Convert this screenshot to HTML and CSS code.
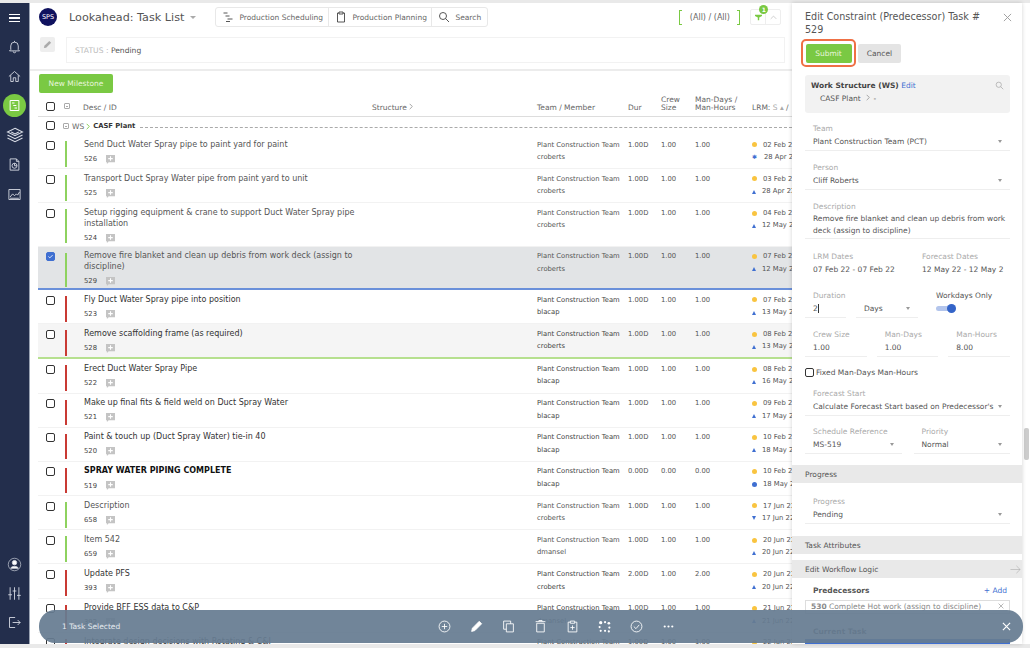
FILE: index.html
```html
<!DOCTYPE html>
<html>
  <head>
    <title>Lookahead: Task List</title>
    <meta charset="utf-8">
    <link rel="stylesheet" href="styles.css">
  </head>
  <body>
    <svg class="defs" width="0" height="0">
      <symbol id="i-plus-note" viewBox="0 0 10 10"><path d="M0 0h10v8H3L1 10V8H0z" fill="#c4c4c4"/><path d="M5 1.500v5M2.500 4h5" stroke="#fff" stroke-width="1.200"/></symbol>
      <symbol id="i-chev" viewBox="0 0 6 10"><path d="M1 1l4 4-4 4" fill="none" stroke="currentColor" stroke-width="1.300"/></symbol>
    </svg>
    <div class="app">
      <!-- left nav -->
      <nav class="sidebar">
        <div class="burger"><span></span><span></span><span></span></div>
        <svg class="nav-icon" viewBox="0 0 24 24"><path d="M12 3v2M6 17V11a6 6 0 0 1 12 0v6l2 2H4zM10 20a2 2 0 0 0 4 0"/></svg>
        <svg class="nav-icon" viewBox="0 0 24 24"><path d="M3 12l9-8 9 8M6 10v10h4v-6h4v6h4V10"/></svg>
        <div class="nav-active"><svg viewBox="0 0 24 24"><path d="M5 4h14v16H5zM8 8h4M10 12h5M12 16h4"/></svg></div>
        <svg class="nav-icon nav-wide" viewBox="0 0 24 24"><path d="M12 3l10 5-10 5L2 8zM2 12l10 5 10-5M2 16l10 5 10-5M7 8l5 2.500 5-2.500"/></svg>
        <svg class="nav-icon" viewBox="0 0 24 24"><path d="M5 3h10l4 4v14H5zM15 3v4h4"/><circle cx="12" cy="14" r="4"/><path d="M12 10v4h4"/></svg>
        <svg class="nav-icon" viewBox="0 0 24 24"><path d="M3 4h18v16H3zM5 16l4-5 3 3 3-3 2 2 3-5"/><path d="M5 18h14"/></svg>
        <div class="nav-bottom">
          <svg class="nav-icon" viewBox="0 0 24 24"><circle cx="12" cy="12" r="10" stroke-width="1"/><circle cx="12" cy="9" r="3.500" fill="#fff"/><path d="M6 18c1-4 11-4 12 0z" fill="#fff"/></svg>
          <svg class="nav-icon" viewBox="0 0 24 24"><path d="M5 2v20M12 2v20M19 2v20M2 14h6M9 8h6M16 15h6"/></svg>
          <svg class="nav-icon" viewBox="0 0 24 24"><path d="M13 4H4v16h9M9 12h12M17 8l4 4-4 4"/></svg>
        </div>
      </nav>

      <main class="main">
        <header class="topbar">
          <div class="logo">SPS</div>
          <h1>Lookahead: Task List</h1>
          <span class="caret title-caret"></span>
          <div class="btn-group">
            <span class="seg seg-sched"><svg viewBox="0 0 24 24"><path d="M3 4h8M7 10h8M11 16h10M8 21h8"/></svg>Production Scheduling</span>
            <span class="seg seg-plan"><svg viewBox="0 0 24 24"><path d="M8 4H5v18h14V4h-3M8 2h8v4H8z"/></svg>Production Planning</span>
            <span class="seg seg-search"><svg viewBox="0 0 24 24"><circle cx="10" cy="10" r="7"/><path d="M15 15l7 7"/></svg>Search</span>
          </div>
          <div class="all-filter">(All) / (All)</div>
          <div class="filter-group">
            <span class="filter-cell"><svg viewBox="0 0 10 10"><path d="M0 1h10v2L6 5v4H4V5L0 3z" fill="#7ac943"/></svg><b class="badge">1</b></span>
            <span class="filter-cell"><svg viewBox="0 0 10 10"><path d="M1 7l4-4 4 4" class="chev"/></svg></span>
          </div>
        </header>
        <div class="status-row">
          <span class="edit-btn"><svg viewBox="0 0 10 10"><path d="M1 9l.5-2.500L7 1l2 2-5.500 5.500z" fill="#aaa"/></svg></span>
          <div class="status-box"><span class="status-key">STATUS :</span> Pending</div>
        </div>
        <div class="action-row"><button class="btn-new">New Milestone</button></div>

        <div class="row head">
          <span class="cell-check"><i class="check"></i></span>
          <span class="collapse"></span>
          <span class="head-desc">Desc / ID</span>
          <span class="head-structure">Structure <svg class="chev-icon"><use href="#i-chev"/></svg></span>
          <span>Team / Member</span>
          <span>Dur</span>
          <span>Crew<br>Size</span>
          <span>Man-Days /<br>Man-Hours</span>
          <span class="nowrap">LRM: <em>S &#x25B4;</em> /</span>
        </div>
        <div class="ws-row">
          <span class="cell-check"><i class="check"></i></span>
          <span class="collapse"></span>
          <span class="ws-key">WS</span><svg class="chev-icon ws-arrow"><use href="#i-chev"/></svg><b>CASF Plant</b>
          <span class="ws-line"></span>
        </div>

        <div class="row task green">
          <span class="cell-check"><i class="check"></i></span><span class="bar"></span>
          <div class="desc">Send Duct Water Spray pipe to paint yard for paint<div class="id">526 <svg class="note"><use href="#i-plus-note"/></svg></div></div>
          <div class="team">Plant Construction Team<br>croberts</div><span>1.00D</span><span>1.00</span><span>1.00</span>
          <div class="lrm"><span><i class="dot"></i>02 Feb 22</span><span><i class="star">&#x2731;</i>28 Apr 22</span></div>
        </div>
        <div class="row task green">
          <span class="cell-check"><i class="check"></i></span><span class="bar"></span>
          <div class="desc">Transport Duct Spray Water pipe from paint yard to unit<div class="id">525 <svg class="note"><use href="#i-plus-note"/></svg></div></div>
          <div class="team">Plant Construction Team<br>croberts</div><span>1.00D</span><span>1.00</span><span>1.00</span>
          <div class="lrm"><span><i class="dot"></i>03 Feb 22</span><span><i class="tri"></i>28 Apr 22</span></div>
        </div>
        <div class="row task green tall">
          <span class="cell-check"><i class="check"></i></span><span class="bar"></span>
          <div class="desc">Setup rigging equipment &amp; crane to support Duct Water Spray pipe installation<div class="id">524 <svg class="note"><use href="#i-plus-note"/></svg></div></div>
          <div class="team">Plant Construction Team<br>croberts</div><span>1.00D</span><span>1.00</span><span>1.00</span>
          <div class="lrm"><span><i class="dot"></i>04 Feb 22</span><span><i class="tri"></i>12 May 22</span></div>
        </div>
        <div class="row task green tall selected">
          <span class="cell-check"><i class="check checked"><svg viewBox="0 0 10 10"><path d="M2 5l2 2 4-4"/></svg></i></span><span class="bar"></span>
          <div class="desc">Remove fire blanket and clean up debris from work deck (assign to discipline)<div class="id">529 <svg class="note"><use href="#i-plus-note"/></svg></div></div>
          <div class="team">Plant Construction Team<br>croberts</div><span>1.00D</span><span>1.00</span><span>1.00</span>
          <div class="lrm"><span><i class="dot"></i>07 Feb 22</span><span><i class="tri"></i>12 May 22</span></div>
        </div>
        <div class="row task red">
          <span class="cell-check"><i class="check"></i></span><span class="bar"></span>
          <div class="desc">Fly Duct Water Spray pipe into position<div class="id">523 <svg class="note"><use href="#i-plus-note"/></svg></div></div>
          <div class="team">Plant Construction Team<br>blacap</div><span>1.00D</span><span>1.00</span><span>1.00</span>
          <div class="lrm"><span><i class="dot"></i>07 Feb 22</span><span><i class="tri"></i>13 May 22</span></div>
        </div>
        <div class="row task red hover">
          <span class="cell-check"><i class="check"></i></span><span class="bar"></span>
          <div class="desc">Remove scaffolding frame (as required)<div class="id">528 <svg class="note"><use href="#i-plus-note"/></svg></div></div>
          <div class="team">Plant Construction Team<br>croberts</div><span>1.00D</span><span>1.00</span><span>1.00</span>
          <div class="lrm"><span><i class="dot"></i>08 Feb 22</span><span><i class="tri"></i>13 May 22</span></div>
        </div>
        <div class="row task red">
          <span class="cell-check"><i class="check"></i></span><span class="bar"></span>
          <div class="desc">Erect Duct Water Spray Pipe<div class="id">522 <svg class="note"><use href="#i-plus-note"/></svg></div></div>
          <div class="team">Plant Construction Team<br>blacap</div><span>1.00D</span><span>1.00</span><span>1.00</span>
          <div class="lrm"><span><i class="dot"></i>08 Feb 22</span><span><i class="tri"></i>16 May 22</span></div>
        </div>
        <div class="row task red">
          <span class="cell-check"><i class="check"></i></span><span class="bar"></span>
          <div class="desc">Make up final fits &amp; field weld on Duct Spray Water<div class="id">521 <svg class="note"><use href="#i-plus-note"/></svg></div></div>
          <div class="team">Plant Construction Team<br>blacap</div><span>1.00D</span><span>1.00</span><span>1.00</span>
          <div class="lrm"><span><i class="dot"></i>09 Feb 22</span><span><i class="tri"></i>17 May 22</span></div>
        </div>
        <div class="row task red">
          <span class="cell-check"><i class="check"></i></span><span class="bar"></span>
          <div class="desc">Paint &amp; touch up (Duct Spray Water) tie-in 40<div class="id">520 <svg class="note"><use href="#i-plus-note"/></svg></div></div>
          <div class="team">Plant Construction Team<br>blacap</div><span>1.00D</span><span>1.00</span><span>1.00</span>
          <div class="lrm"><span><i class="dot"></i>10 Feb 22</span><span><i class="tri"></i>18 May 22</span></div>
        </div>
        <div class="row task red milestone">
          <span class="cell-check"><i class="check"></i></span><span class="bar"></span>
          <div class="desc"><b>SPRAY WATER PIPING COMPLETE</b><div class="id">519 <svg class="note"><use href="#i-plus-note"/></svg></div></div>
          <div class="team">Plant Construction Team<br>blacap</div><span>0.00D</span><span>0.00</span><span>0.00</span>
          <div class="lrm"><span><i class="dot"></i>10 Feb 22</span><span><i class="dot blue"></i>18 May 22</span></div>
        </div>
        <div class="row task green">
          <span class="cell-check"><i class="check"></i></span><span class="bar"></span>
          <div class="desc">Description<div class="id">658 <svg class="note"><use href="#i-plus-note"/></svg></div></div>
          <div class="team">Plant Construction Team<br>croberts</div><span>1.00D</span><span>1.00</span><span>1.00</span>
          <div class="lrm"><span><i class="dot"></i>17 Jun 22</span><span><i class="tri down"></i>17 Jun 22</span></div>
        </div>
        <div class="row task green">
          <span class="cell-check"><i class="check"></i></span><span class="bar"></span>
          <div class="desc">Item 542<div class="id">659 <svg class="note"><use href="#i-plus-note"/></svg></div></div>
          <div class="team">Plant Construction Team<br>dmansel</div><span>1.00D</span><span>1.00</span><span>1.00</span>
          <div class="lrm"><span><i class="dot"></i>20 Jun 22</span><span><i class="tri"></i>20 Jun 22</span></div>
        </div>
        <div class="row task red">
          <span class="cell-check"><i class="check"></i></span><span class="bar"></span>
          <div class="desc">Update PFS<div class="id">393 <svg class="note"><use href="#i-plus-note"/></svg></div></div>
          <div class="team">Plant Construction Team<br>croberts</div><span>2.00D</span><span>1.00</span><span>2.00</span>
          <div class="lrm"><span><i class="dot"></i>20 Jun 22</span><span><i class="tri"></i>20 Jun 22</span></div>
        </div>
        <div class="row task red">
          <span class="cell-check"><i class="check"></i></span><span class="bar"></span>
          <div class="desc">Provide BFF ESS data to C&amp;P<div class="id">392 <svg class="note"><use href="#i-plus-note"/></svg></div></div>
          <div class="team">Plant Construction Team<br>dmansel</div><span>1.00D</span><span>1.00</span><span>1.00</span>
          <div class="lrm"><span><i class="dot"></i>21 Jun 22</span><span><i class="tri"></i>21 Jun 22</span></div>
        </div>
        <div class="row task red">
          <span class="cell-check"><i class="check"></i></span><span class="bar"></span>
          <div class="desc">Integrate design decisions with Rotating &amp; C&amp;I</div>
          <div class="team">Plant Construction Team</div><span>1.00D</span><span>1.00</span><span>1.00</span>
          <div class="lrm"><span><i class="dot"></i>22 Jun 22</span></div>
        </div>
      </main>

      <!-- edit panel -->
      <aside class="panel">
        <div class="panel-head">
          <h2>Edit Constraint (Predecessor) Task # 529</h2>
          <svg class="panel-close" viewBox="0 0 10 10"><path d="M1 1l8 8M9 1l-8 8"/></svg>
        </div>
        <div class="panel-actions">
          <span class="focus-ring"><button class="btn-submit">Submit</button></span>
          <button class="btn-cancel">Cancel</button>
        </div>
        <div class="ws-box">
          <div><b>Work Structure (WS)</b> <a>Edit</a></div>
          <div class="ws-path">CASF Plant <svg class="chev-icon"><use href="#i-chev"/></svg> -</div>
          <svg class="ws-search" viewBox="0 0 24 24"><circle cx="10" cy="10" r="7"/><path d="M15 15l7 7"/></svg>
        </div>

        <div class="field"><label>Team</label><div class="value select">Plant Construction Team (PCT)</div></div>
        <div class="field"><label>Person</label><div class="value select">Cliff Roberts</div></div>
        <div class="field field-desc"><label>Description</label><div class="value area">Remove fire blanket and clean up debris from work deck (assign to discipline)</div></div>

        <div class="dates">
          <div class="field plain"><label>LRM Dates</label><div class="value">07 Feb 22 - 07 Feb 22</div></div>
          <div class="field plain"><label>Forecast Dates</label><div class="value">12 May 22 - 12 May 2</div></div>
        </div>

        <div class="duration">
          <div class="field dur-num"><label>Duration</label><div class="value"><span class="cursor">2</span></div></div>
          <div class="field dur-unit"><label>&nbsp;</label><div class="value select">Days</div></div>
          <div class="workdays">
            <label>Workdays Only</label>
            <span class="toggle"><i></i></span>
          </div>
        </div>

        <div class="three">
          <div class="field"><label>Crew Size</label><div class="value">1.00</div></div>
          <div class="field"><label>Man-Days</label><div class="value">1.00</div></div>
          <div class="field"><label>Man-Hours</label><div class="value">8.00</div></div>
        </div>

        <div class="fixed"><i class="check"></i>Fixed Man-Days Man-Hours</div>

        <div class="field"><label>Forecast Start</label><div class="value select">Calculate Forecast Start based on Predecessor's</div></div>
        <div class="two">
          <div class="field"><label>Schedule Reference</label><div class="value select">MS-519</div></div>
          <div class="field"><label>Priority</label><div class="value select">Normal</div></div>
        </div>

        <div class="band band-progress">Progress</div>
        <div class="field field-progress"><label>Progress</label><div class="value select">Pending</div></div>
        <div class="band band-attr">Task Attributes</div>
        <div class="band band-logic">Edit Workflow Logic<svg viewBox="0 0 24 24"><path d="M1 12h21M14 4l8 8-8 8"/></svg></div>

        <div class="pred-head"><b>Predecessors</b><a>+ Add</a></div>
        <div class="pred-box"><b>530</b> Complete Hot work (assign to discipline)<svg viewBox="0 0 10 10"><path d="M1 1l8 8M9 1l-8 8"/></svg></div>
        <div class="current"><b>Current Task</b></div>
        <div class="current-line"></div>
      </aside>
      <div class="scrollbar"><span></span></div>

      <!-- selection toolbar -->
      <div class="select-bar">
        <span class="select-count">1 Task Selected</span>
        <div class="select-tools">
          <svg viewBox="0 0 24 24"><circle cx="12" cy="12" r="10"/><path d="M12 7v10M7 12h10"/></svg>
          <svg viewBox="0 0 24 24"><path d="M3 21l1.500-6L17 2.500l4.500 4.500L9 19.500z" fill="#fff"/></svg>
          <svg viewBox="0 0 24 24"><path d="M8 7h13v15H8zM16 7V2H3v15h5"/></svg>
          <svg viewBox="0 0 24 24"><path d="M5 6h14v16H5zM3 3h18M9 3V1h6v2"/></svg>
          <svg viewBox="0 0 24 24"><path d="M8 4H4v18h16V4h-4M8 2h8v4H8zM12 10v8M8 14h8"/></svg>
          <svg viewBox="0 0 24 24" class="tool-net"><circle cx="5" cy="5" r="3"/><circle cx="13" cy="4" r="2"/><circle cx="20" cy="6" r="2.500"/><circle cx="3" cy="13" r="2"/><circle cx="21" cy="14" r="2"/><circle cx="5" cy="20" r="2"/><circle cx="13" cy="20" r="2"/><circle cx="20" cy="21" r="2"/></svg>
          <svg viewBox="0 0 24 24"><circle cx="12" cy="12" r="10"/><path d="M7 12l4 4 6-7"/></svg>
          <svg viewBox="0 0 24 24" class="tool-dots"><circle cx="5" cy="12" r="2"/><circle cx="12" cy="12" r="2"/><circle cx="19" cy="12" r="2"/></svg>
        </div>
        <svg class="select-close" viewBox="0 0 10 10"><path d="M1 1l8 8M9 1l-8 8"/></svg>
      </div>
    </div>
  </body>
</html>
```

FILE: styles.css
```css
html, body {
  margin: 0;
  width: 1030px;
  height: 648px;
  overflow: hidden;
  background-color: #e9e9e9;
  font-family: "DejaVu Sans", sans-serif;
  font-size: 7.5px;
  color: #555;
}
.defs {
  position: absolute;
}
button {
  border: 0;
  font-family: inherit;
  padding: 0;
}
i, em {
  font-style: normal;
}
.chev-icon {
  width: 4px;
  height: 7px;
  color: #999;
}
.app {
  position: relative;
  display: flex;
  height: 641px;
  margin-top: 3px;
  background-color: #fff;
}

/* sidebar */
.sidebar {
  flex: 0 0 29px;
  display: flex;
  flex-direction: column;
  align-items: center;
  background-color: #232e4c;
  border-right: 1px solid #9aa3b3;
}
.burger {
  margin: 11px 0 15px 0;
}
.burger span {
  display: block;
  width: 11px;
  height: 1.4px;
  margin-bottom: 2px;
  background-color: #fff;
}
.nav-icon {
  width: 15px;
  height: 15px;
  margin-bottom: 14.5px;
  fill: none;
  stroke: #d9dde6;
  stroke-width: 1.4;
}
.nav-wide {
  width: 18px;
  height: 18px;
  margin: 0 0 13px 0;
}
.nav-active {
  width: 23px;
  height: 23px;
  margin: -4px 0 9px 0;
  border-radius: 50%;
  background-color: #7ac943;
  display: flex;
  align-items: center;
  justify-content: center;
}
.nav-active svg {
  width: 15px;
  height: 15px;
  fill: none;
  stroke: #fff;
  stroke-width: 1.6;
}
.nav-bottom {
  margin-top: auto;
  display: flex;
  flex-direction: column;
  align-items: center;
}
.nav-bottom .nav-icon {
  margin-bottom: 14px;
}

/* main */
.main {
  flex: 0 0 762px;
  overflow: hidden;
}
.topbar {
  display: flex;
  align-items: center;
  height: 28px;
  padding: 0 0 0 9px;
}
.logo {
  flex: none;
  width: 18px;
  height: 18px;
  border-radius: 50%;
  background-color: #10125f;
  color: #fff;
  font-size: 6.5px;
  line-height: 18px;
  text-align: center;
}
h1 {
  margin: 0 0 0 12px;
  font-size: 11.2px;
  font-weight: normal;
  color: #555;
  white-space: nowrap;
}
.caret {
  width: 0;
  height: 0;
  border-left: 3px solid transparent;
  border-right: 3px solid transparent;
  border-top: 3.5px solid #aaa;
}
.title-caret {
  margin: 0 0 0 6px;
}
.btn-group {
  display: flex;
  flex: none;
  height: 18px;
  margin-left: 19px;
  border: 1px solid #e8e8e8;
  border-radius: 3px;
}
.seg {
  display: flex;
  align-items: center;
  gap: 5px;
  padding: 0 6px;
  border-right: 1px solid #e8e8e8;
  white-space: nowrap;
  box-sizing: border-box;
  color: #666;
}
.seg:last-child {
  border-right: 0;
}
.seg svg {
  flex: none;
  width: 12px;
  height: 12px;
  fill: none;
  stroke: #444;
  stroke-width: 1.8;
}
.seg-sched {
  width: 113px;
}
.seg-plan {
  width: 103px;
}
.seg-search {
  width: 55px;
}
.all-filter {
  position: relative;
  flex: none;
  width: 61px;
  height: 15px;
  margin-left: 191px;
  text-align: center;
  line-height: 15px;
  font-size: 8px;
  color: #666;
}
.all-filter:before, .all-filter:after {
  content: "";
  position: absolute;
  top: 0;
  bottom: 0;
  width: 2px;
  border: 1px solid #7ac943;
}
.all-filter:before {
  left: 0;
  border-right: 0;
}
.all-filter:after {
  right: 0;
  border-left: 0;
}
.filter-group {
  display: flex;
  margin-left: 10px;
  height: 14px;
  border: 1px solid #eee;
  border-radius: 2px;
}
.filter-cell {
  position: relative;
  width: 14px;
  display: flex;
  align-items: center;
  justify-content: center;
  border-right: 1px solid #eee;
}
.filter-cell:last-child {
  border-right: 0;
}
.filter-cell svg {
  width: 7px;
  height: 7px;
}
.chev {
  fill: none;
  stroke: #bbb;
}
.badge {
  position: absolute;
  top: -5px;
  right: -3px;
  width: 9px;
  height: 9px;
  border-radius: 50%;
  background-color: #7ac943;
  color: #fff;
  font-size: 6px;
  line-height: 9px;
  text-align: center;
}
.status-row {
  display: flex;
  gap: 11px;
  height: 26px;
  padding: 6px 7px 6px 10px;
  border-bottom: 2px solid #ececec;
}
.edit-btn {
  flex: 0 0 15px;
  height: 15px;
  background-color: #eee;
  border-radius: 2px;
  display: flex;
  align-items: center;
  justify-content: center;
}
.edit-btn svg {
  width: 9px;
  height: 9px;
}
.status-box {
  flex: 1;
  box-sizing: border-box;
  height: 26px;
  line-height: 26px;
  padding-left: 8px;
  border: 1px solid #f2f2f2;
  font-size: 7.6px;
}
.status-key {
  color: #bbb;
}
.action-row {
  padding: 3px 0 0 9px;
}
.btn-new, .btn-submit {
  background-color: #7ac943;
  color: #e8f5dc;
  border-radius: 2px;
  font-size: 7.5px;
}
.btn-new {
  width: 74px;
  height: 19px;
}

/* task rows */
.row {
  display: grid;
  grid-template-columns: 27px 19px 453px 91px 33px 34px 57px auto;
  margin-left: 8px;
  box-sizing: border-box;
}
.cell-check {
  padding-left: 8px;
}
.check {
  display: inline-block;
  width: 9px;
  height: 9px;
  border: 1.2px solid #333;
  border-radius: 2px;
  box-sizing: border-box;
  background-color: #fff;
}
.checked {
  background-color: #3f6fd1;
  border-color: #3f6fd1;
}
.checked svg {
  display: block;
  fill: none;
  stroke: #fff;
  stroke-width: 1.2;
}
.head {
  grid-template-columns: 27px 19px 288px 165px 91px 33px 34px 57px auto;
  height: 24px;
  align-items: end;
  padding-bottom: 4px;
  line-height: 8px;
  border-bottom: 1px solid #ddd;
  color: #666;
}
.head .check {
  margin-bottom: -1px;
}
.head .collapse {
  margin: 0 0 3px -1px;
}
.head-desc {
  margin-left: -1px;
}
.head em {
  color: #aaa;
}
.nowrap {
  white-space: nowrap;
}
.collapse {
  display: inline-block;
  width: 4px;
  height: 4px;
  border: 1px solid #aaa;
  border-radius: 1px;
  position: relative;
}
.collapse:after {
  content: "";
  position: absolute;
  left: 1px;
  right: 1px;
  top: 1.5px;
  height: 1px;
  background-color: #aaa;
}
.ws-row {
  display: flex;
  align-items: center;
  height: 18px;
  margin-left: 8px;
  color: #666;
}
.ws-row .cell-check {
  width: 17px;
  flex: none;
}
.ws-row .collapse {
  margin: 0 3px 0 0;
}
.ws-key {
  margin-right: 2px;
}
.ws-arrow {
  color: #7ac943;
  margin-right: 3px;
}
.ws-row b {
  font-size: 6.8px;
  color: #333;
}
.ws-line {
  flex: 1;
  height: 0;
  margin: 3px 0 0 5px;
  border-top: 1px dashed #aaa;
}
.task {
  min-height: 34.2px;
  padding-top: 4.5px;
  border-bottom: 1px solid #f2f2f2;
  font-size: 6.8px;
  line-height: 10.7px;
}
.task .check {
  margin-top: 1px;
}
.tall {
  min-height: 43.4px;
}
.bar {
  display: block;
  width: 2px;
  height: 25.5px;
  margin-top: 1.5px;
}
.tall .bar {
  height: 34px;
}
.green .bar {
  background-color: #8ed25f;
}
.red .bar {
  background-color: #c93a34;
}
.desc {
  width: 280px;
  font-size: 8px;
  color: #555;
}
.red .desc {
  color: #333;
}
.milestone .desc b {
  color: #111;
}
.id {
  display: flex;
  align-items: center;
  gap: 9px;
  margin-top: 3.5px;
  font-size: 6.8px;
  color: #444;
}
.note {
  width: 9px;
  height: 9px;
}
.team {
  line-height: 12.6px;
  margin-top: -1px;
  white-space: nowrap;
}
.red .team {
  color: #444;
}
.lrm {
  display: flex;
  flex-direction: column;
  line-height: 12.6px;
  margin-top: -1px;
  white-space: nowrap;
}
.lrm span {
  display: flex;
  align-items: center;
}
.lrm i {
  flex: none;
  margin-right: 6px;
}
.dot {
  width: 5px;
  height: 5px;
  border-radius: 50%;
  background-color: #f9c440;
}
.dot.blue {
  background-color: #3f6fd1;
}
.tri {
  width: 0;
  height: 0;
  border-left: 2.5px solid transparent;
  border-right: 2.5px solid transparent;
  border-bottom: 4.5px solid #3f6fd1;
}
.tri.down {
  border-bottom: 0;
  border-top: 4.5px solid #3f6fd1;
}
.star {
  color: #3f6fd1;
  font-size: 6px;
  width: 6px;
}
.selected {
  background-color: #e2e4e6;
  border-bottom: 2px solid #6a90da;
}
.hover {
  background-color: #f5f5f5;
  border-bottom: 2px solid #b6e08f;
  min-height: 35px;
}

/* right panel */
.panel {
  flex: 0 0 205px;
  padding: 8px 12px 0 13px;
  overflow: hidden;
  position: relative;
  z-index: 1;
  box-shadow: 0 0 4px rgba(0, 0, 0, 0.18);
  color: #555;
}
.panel-head {
  display: flex;
  justify-content: space-between;
}
h2 {
  width: 190px;
  margin: 0;
  font-size: 9.6px;
  font-weight: normal;
  line-height: 12.5px;
  color: #555;
}
.panel-close {
  flex: 0 0 9px;
  height: 9px;
  margin: 2px -1.5px 0 0;
  fill: none;
  stroke: #999;
}
.panel-actions {
  display: flex;
  align-items: center;
  gap: 2px;
  margin: 3px 0 8px -4px;
}
.focus-ring {
  display: block;
  padding: 2.5px;
  border: 2px solid #ef7045;
  border-radius: 5px;
  line-height: 0;
}
.btn-submit {
  width: 46px;
  height: 19px;
}
.btn-cancel {
  width: 43px;
  height: 19px;
  background-color: #e4e4e4;
  color: #555;
  border-radius: 2px;
  font-size: 7.5px;
}
.ws-box {
  position: relative;
  height: 38px;
  box-sizing: border-box;
  padding: 5px 6px;
  background-color: #f2f2f2;
  border-radius: 3px;
  line-height: 12px;
}
.ws-box + .field {
  margin-top: 11px;
}
.ws-box b {
  color: #444;
}
.ws-box a, .pred-head a {
  color: #3f6fd1;
}
.ws-path {
  padding-left: 9px;
  margin-top: 1px;
}
.ws-path .chev-icon {
  margin: 0 1px 0 3px;
}
.ws-search {
  position: absolute;
  top: 6px;
  right: 6px;
  width: 9px;
  height: 9px;
  fill: none;
  stroke: #aaa;
  stroke-width: 2;
}
.field {
  margin-top: 12px;
  border-bottom: 1px solid #eee;
}
.field label {
  display: block;
  padding-left: 8px;
  color: #aaa;
  line-height: 10px;
}
.value {
  position: relative;
  padding-left: 8px;
  line-height: 13px;
  margin-top: 1px;
  padding-bottom: 2px;
  white-space: nowrap;
}
.select:after {
  content: "";
  position: absolute;
  right: 8px;
  top: 5px;
  border-left: 2.5px solid transparent;
  border-right: 2.5px solid transparent;
  border-top: 3px solid #999;
}
.area {
  white-space: normal;
  line-height: 11.5px;
  height: 23px;
}
.plain {
  border-bottom: 0;
}
.dates {
  display: flex;
  margin-top: 13px;
}
.dates .field {
  margin-top: 0;
  flex: 0 0 109px;
  white-space: nowrap;
}
.dates .field:last-child {
  flex: 0 0 97px;
  overflow: hidden;
}
.duration {
  display: flex;
  gap: 10px;
  margin-top: 13px;
}
.duration .field {
  margin-top: 0;
}
.dur-num {
  flex: 0 0 41px;
}
.dur-unit {
  flex: 0 0 62px;
}
.cursor {
  border-right: 1px solid #333;
}
.workdays {
  margin-left: 8px;
  white-space: nowrap;
  line-height: 10px;
}
.workdays label {
  display: block;
}
.toggle {
  display: block;
  position: relative;
  width: 20px;
  height: 5px;
  margin-top: 5px;
  background-color: #b3c5ec;
  border-radius: 3px;
}
.toggle i {
  position: absolute;
  right: 0;
  top: -2px;
  width: 9px;
  height: 9px;
  border-radius: 50%;
  background-color: #3464c8;
}
.three {
  display: flex;
  gap: 10px;
}
.three .field {
  flex: 1;
}
.two {
  display: flex;
  gap: 12px;
}
.two .field {
  flex: 1;
  margin-top: 11px;
}
.fixed {
  display: flex;
  align-items: center;
  gap: 2px;
  margin-top: 11px;
  color: #555;
}
.fixed + .field {
  margin-top: 12px;
}
.band {
  display: flex;
  align-items: center;
  justify-content: space-between;
  height: 18px;
  margin: 0 -12px 0 -13px;
  padding: 0 0 0 13px;
  background-color: #e9e9e9;
  color: #555;
}
.band svg {
  width: 11px;
  height: 11px;
  margin-right: 1px;
  fill: none;
  stroke: #999;
}
.band-progress {
  margin-top: 11px;
}
.field-progress {
  margin-top: 14px;
}
.band-attr {
  margin-top: 12px;
}
.band-logic {
  margin-top: 6px;
}
.pred-head {
  display: flex;
  justify-content: space-between;
  margin-top: 8px;
  padding: 0 3px 0 8px;
}
.pred-box {
  position: relative;
  margin-top: 5px;
  height: 14px;
  box-sizing: border-box;
  border: 1px solid #ddd;
  padding-left: 5px;
  line-height: 12px;
  color: #888;
}
.pred-box svg {
  position: absolute;
  right: 5px;
  top: 2px;
  width: 6px;
  height: 6px;
  fill: none;
  stroke: #888;
}
.current {
  margin-top: 13px;
  padding-left: 8px;
}
.current-line {
  height: 6px;
  margin-top: 3px;
  background-color: #3f6fd1;
}
.scrollbar {
  flex: 1;
  position: relative;
}
.scrollbar span {
  position: absolute;
  left: 2px;
  right: 1px;
  top: 425px;
  height: 32px;
  background-color: #ccc;
  border-radius: 2px;
}

/* selection toolbar */
.select-bar {
  position: absolute;
  left: 39px;
  top: 607px;
  width: 984px;
  height: 33px;
  display: flex;
  align-items: center;
  z-index: 2;
  border-radius: 16px;
  background-color: rgba(102, 124, 145, 0.93);
  color: #e6ebf0;
}
.select-count {
  position: absolute;
  left: 23px;
}
.select-tools {
  position: absolute;
  left: 399px;
  display: flex;
  gap: 19px;
}
.select-tools svg {
  width: 13px;
  height: 13px;
  fill: none;
  stroke: #fff;
  stroke-width: 1.6;
}
.select-tools .tool-net, .select-tools .tool-dots {
  fill: #fff;
  stroke: none;
}
.select-close {
  position: absolute;
  right: 12px;
  width: 9px;
  height: 9px;
  fill: none;
  stroke: #fff;
  stroke-width: 1.3;
}
```
